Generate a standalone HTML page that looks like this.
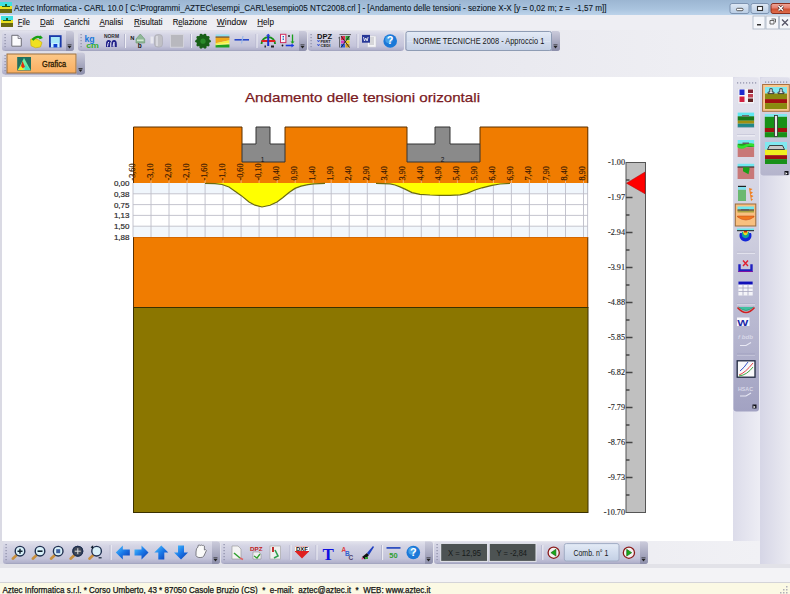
<!DOCTYPE html>
<html><head><meta charset="utf-8">
<style>
*{margin:0;padding:0}
html,body{width:790px;height:594px;overflow:hidden;background:#ebebf1;font-family:"Liberation Sans",sans-serif}
svg{position:absolute;left:0;top:0;display:block}
text{white-space:pre}
</style></head><body>
<svg width="790" height="594" viewBox="0 0 790 594">
<defs>
<linearGradient id="gTitle" x1="0" y1="0" x2="0" y2="1"><stop offset="0" stop-color="#9cb6d2"/><stop offset="0.6" stop-color="#a9c3de"/><stop offset="1" stop-color="#bcd3ea"/></linearGradient>
<linearGradient id="gTb" x1="0" y1="0" x2="0" y2="1"><stop offset="0" stop-color="#e2e2ec"/><stop offset="0.2" stop-color="#d4d4e4"/><stop offset="0.75" stop-color="#c4c4da"/><stop offset="1" stop-color="#aaaac6"/></linearGradient>
<linearGradient id="gCh" x1="0" y1="0" x2="0" y2="1"><stop offset="0" stop-color="#cbcbdb"/><stop offset="1" stop-color="#8c8eaa"/></linearGradient>
<linearGradient id="gVt1" x1="0" y1="0" x2="0" y2="1"><stop offset="0" stop-color="#e4e4ee"/><stop offset="0.45" stop-color="#d0d0e0"/><stop offset="1" stop-color="#a2a2c2"/></linearGradient>
<linearGradient id="gVt2" x1="0" y1="0" x2="0" y2="1"><stop offset="0" stop-color="#e0e0ec"/><stop offset="1" stop-color="#b4b4cc"/></linearGradient>
<linearGradient id="gCombo" x1="0" y1="0" x2="0" y2="1"><stop offset="0" stop-color="#e4ebf6"/><stop offset="0.5" stop-color="#d3ddee"/><stop offset="1" stop-color="#c3cfe4"/></linearGradient>
<linearGradient id="gGraf" x1="0" y1="0" x2="0" y2="1"><stop offset="0" stop-color="#fcc888"/><stop offset="1" stop-color="#f9ae60"/></linearGradient>
<linearGradient id="gBtn" x1="0" y1="0" x2="0" y2="1"><stop offset="0" stop-color="#dfe9f5"/><stop offset="1" stop-color="#b8cce4"/></linearGradient>
<linearGradient id="gClose" x1="0" y1="0" x2="0" y2="1"><stop offset="0" stop-color="#f0a898"/><stop offset="0.45" stop-color="#e48070"/><stop offset="0.55" stop-color="#d05030"/><stop offset="1" stop-color="#e07050"/></linearGradient>
<linearGradient id="gRd1" x1="0" y1="0" x2="1" y2="0"><stop offset="0" stop-color="#dcdcea"/><stop offset="1" stop-color="#ededf4"/></linearGradient>
<linearGradient id="gRd2" x1="0" y1="0" x2="1" y2="0"><stop offset="0" stop-color="#d6d6e6"/><stop offset="1" stop-color="#ebebf2"/></linearGradient>
<linearGradient id="gDock" x1="0" y1="0" x2="1" y2="0"><stop offset="0" stop-color="#dcdce6"/><stop offset="1" stop-color="#f1f1f5"/></linearGradient>
</defs>
<rect x="0" y="0" width="790" height="594" fill="#eeeef3"/>
<rect x="0" y="0" width="790" height="15" fill="url(#gTitle)"/>
<rect x="0" y="30" width="790" height="47" fill="url(#gDock)"/>
<rect x="0" y="77" width="2" height="464" fill="#dadae4"/>
<rect x="2" y="77" width="731" height="464" fill="#fff"/>
<rect x="733" y="77" width="27" height="464" fill="url(#gRd1)"/>
<rect x="0" y="541" width="760" height="24" fill="url(#gDock)"/>
<rect x="760" y="77" width="30" height="488" fill="url(#gRd2)"/>
<rect x="0" y="564" width="790" height="4" fill="#e2e2e8"/>
<rect x="0" y="568" width="790" height="14" fill="#f3f3f6"/>
<rect x="0" y="582" width="790" height="1" fill="#d4d4d8"/>
<rect x="0" y="583" width="790" height="11" fill="#fbf9e4"/>
<rect x="0" y="2" width="12" height="11" fill="#6a6a10"/>
<rect x="0" y="2" width="12" height="4" fill="#40e0e0"/>
<rect x="0" y="6" width="12" height="3" fill="#e8e020"/>
<path d="M2,6h3v-2h2v2h3v1h-8z" fill="#206020"/>
<text x="14" y="10.7" font-family="Liberation Sans" font-size="8.8" fill="#0e1826" stroke="#0e1826" stroke-width="0.1" textLength="592.5" lengthAdjust="spacingAndGlyphs">Aztec Informatica - CARL 10.0 [ C:\Programmi_AZTEC\esempi_CARL\esempio05 NTC2008.crl ] - [Andamento delle tensioni - sezione X-X [y = 0,02 m; z =  -1,57 m]]</text>
<rect x="730" y="3.5" width="19" height="10" rx="2" fill="url(#gBtn)" stroke="#7d93b0" stroke-width="1"/>
<rect x="736.5" y="8.3" width="6.5" height="2.4" rx="1" fill="#fff" stroke="#333" stroke-width="0.8"/>
<rect x="751" y="3.5" width="18" height="10" rx="2" fill="url(#gBtn)" stroke="#7d93b0" stroke-width="1"/>
<rect x="757.5" y="6.5" width="5" height="4" fill="#fff" stroke="#333" stroke-width="1.1"/>
<rect x="771" y="3.5" width="22" height="10" rx="2" fill="url(#gClose)" stroke="#8a3020" stroke-width="1"/>
<path d="M778.5,6 L783,10.5 M783,6 L778.5,10.5" stroke="#402020" stroke-width="2.6"/><path d="M778.5,6 L783,10.5 M783,6 L778.5,10.5" stroke="#fff" stroke-width="1.5"/>
<rect x="1" y="16" width="12" height="11" fill="#6a6a10"/>
<rect x="1" y="16" width="12" height="4" fill="#40e0e0"/>
<rect x="1" y="20" width="12" height="3" fill="#e8e020"/>
<path d="M3,20h3v-2h2v2h3v1h-8z" fill="#206020"/>
<text x="17.8" y="24.8" font-family="Liberation Sans" font-size="9.2" fill="#101010" stroke="#101010" stroke-width="0.1" textLength="12.2" lengthAdjust="spacingAndGlyphs">File</text>
<rect x="17.8" y="25.9" width="4.6" height="0.9" fill="#333"/>
<text x="40" y="24.8" font-family="Liberation Sans" font-size="9.2" fill="#101010" stroke="#101010" stroke-width="0.1" textLength="14" lengthAdjust="spacingAndGlyphs">Dati</text>
<rect x="40.0" y="25.9" width="5.7" height="0.9" fill="#333"/>
<text x="64" y="24.8" font-family="Liberation Sans" font-size="9.2" fill="#101010" stroke="#101010" stroke-width="0.1" textLength="25.6" lengthAdjust="spacingAndGlyphs">Carichi</text>
<rect x="64.0" y="25.9" width="5.9" height="0.9" fill="#333"/>
<text x="99.5" y="24.8" font-family="Liberation Sans" font-size="9.2" fill="#101010" stroke="#101010" stroke-width="0.1" textLength="23.5" lengthAdjust="spacingAndGlyphs">Analisi</text>
<rect x="99.5" y="25.9" width="5.3" height="0.9" fill="#333"/>
<text x="134" y="24.8" font-family="Liberation Sans" font-size="9.2" fill="#101010" stroke="#101010" stroke-width="0.1" textLength="28.6" lengthAdjust="spacingAndGlyphs">Risultati</text>
<rect x="134.0" y="25.9" width="5.8" height="0.9" fill="#333"/>
<text x="172.7" y="24.8" font-family="Liberation Sans" font-size="9.2" fill="#101010" stroke="#101010" stroke-width="0.1" textLength="34.5" lengthAdjust="spacingAndGlyphs">Relazione</text>
<rect x="178.3" y="25.9" width="4.3" height="0.9" fill="#333"/>
<text x="216.8" y="24.8" font-family="Liberation Sans" font-size="9.2" fill="#101010" stroke="#101010" stroke-width="0.1" textLength="30.2" lengthAdjust="spacingAndGlyphs">Window</text>
<rect x="216.8" y="25.9" width="8.0" height="0.9" fill="#333"/>
<text x="257.3" y="24.8" font-family="Liberation Sans" font-size="9.2" fill="#101010" stroke="#101010" stroke-width="0.1" textLength="16.6" lengthAdjust="spacingAndGlyphs">Help</text>
<rect x="257.3" y="25.9" width="5.8" height="0.9" fill="#333"/>
<rect x="753" y="16" width="12" height="13" fill="#f4f6fa" stroke="#a8b4c4" stroke-width="0.8"/>
<rect x="766" y="16" width="12.5" height="13" fill="#f4f6fa" stroke="#a8b4c4" stroke-width="0.8"/>
<rect x="779.5" y="16" width="11.5" height="13" fill="#f4f6fa" stroke="#a8b4c4" stroke-width="0.8"/>
<rect x="757" y="24" width="4" height="1.5" fill="#333"/>
<path d="M770,20.5h4v3.5h-4z M771.5,19h4v3.5" fill="none" stroke="#555" stroke-width="0.9"/>
<path d="M782,19.5 L788,25.5 M788,19.5 L782,25.5" stroke="#556" stroke-width="1.3"/>
<rect x="2" y="31" width="72" height="20" rx="3" fill="url(#gTb)"/>
<path d="M5,50.5 H71" stroke="#a4a6c0" stroke-width="1"/>
<rect x="4.5" y="34" width="1.2" height="1.2" fill="#8a8ca6"/>
<rect x="4.5" y="37" width="1.2" height="1.2" fill="#8a8ca6"/>
<rect x="4.5" y="40" width="1.2" height="1.2" fill="#8a8ca6"/>
<rect x="4.5" y="43" width="1.2" height="1.2" fill="#8a8ca6"/>
<rect x="4.5" y="46" width="1.2" height="1.2" fill="#8a8ca6"/>
<path d="M66,31 h5 a3,3 0 0 1 3,3 v14 a3,3 0 0 1 -3,3 h-5 z" fill="url(#gCh)"/>
<path d="M67.5,46 h4 l-2,2.5 z" fill="#222"/>
<rect x="67.5" y="44.5" width="4" height="0.8" fill="#222"/>
<rect x="78" y="31" width="229" height="20" rx="3" fill="url(#gTb)"/>
<path d="M81,50.5 H304" stroke="#a4a6c0" stroke-width="1"/>
<rect x="80.5" y="34" width="1.2" height="1.2" fill="#8a8ca6"/>
<rect x="80.5" y="37" width="1.2" height="1.2" fill="#8a8ca6"/>
<rect x="80.5" y="40" width="1.2" height="1.2" fill="#8a8ca6"/>
<rect x="80.5" y="43" width="1.2" height="1.2" fill="#8a8ca6"/>
<rect x="80.5" y="46" width="1.2" height="1.2" fill="#8a8ca6"/>
<path d="M299,31 h5 a3,3 0 0 1 3,3 v14 a3,3 0 0 1 -3,3 h-5 z" fill="url(#gCh)"/>
<path d="M300.5,46 h4 l-2,2.5 z" fill="#222"/>
<rect x="300.5" y="44.5" width="4" height="0.8" fill="#222"/>
<rect x="308" y="31" width="96" height="20" rx="3" fill="url(#gTb)"/>
<path d="M311,50.5 H401" stroke="#a4a6c0" stroke-width="1"/>
<rect x="310.5" y="34" width="1.2" height="1.2" fill="#8a8ca6"/>
<rect x="310.5" y="37" width="1.2" height="1.2" fill="#8a8ca6"/>
<rect x="310.5" y="40" width="1.2" height="1.2" fill="#8a8ca6"/>
<rect x="310.5" y="43" width="1.2" height="1.2" fill="#8a8ca6"/>
<rect x="310.5" y="46" width="1.2" height="1.2" fill="#8a8ca6"/>
<rect x="405" y="31" width="155" height="20" rx="3" fill="url(#gTb)"/>
<path d="M408,50.5 H557" stroke="#a4a6c0" stroke-width="1"/>
<rect x="407.5" y="34" width="1.2" height="1.2" fill="#8a8ca6"/>
<rect x="407.5" y="37" width="1.2" height="1.2" fill="#8a8ca6"/>
<rect x="407.5" y="40" width="1.2" height="1.2" fill="#8a8ca6"/>
<rect x="407.5" y="43" width="1.2" height="1.2" fill="#8a8ca6"/>
<rect x="407.5" y="46" width="1.2" height="1.2" fill="#8a8ca6"/>
<path d="M552,31 h5 a3,3 0 0 1 3,3 v14 a3,3 0 0 1 -3,3 h-5 z" fill="url(#gCh)"/>
<path d="M553.5,46 h4 l-2,2.5 z" fill="#222"/>
<rect x="553.5" y="44.5" width="4" height="0.8" fill="#222"/>
<rect x="2" y="52.5" width="83" height="22" rx="3" fill="url(#gTb)"/>
<path d="M5,74.0 H82" stroke="#a4a6c0" stroke-width="1"/>
<rect x="4.5" y="55" width="1.2" height="1.2" fill="#8a8ca6"/>
<rect x="4.5" y="58" width="1.2" height="1.2" fill="#8a8ca6"/>
<rect x="4.5" y="61" width="1.2" height="1.2" fill="#8a8ca6"/>
<rect x="4.5" y="64" width="1.2" height="1.2" fill="#8a8ca6"/>
<rect x="4.5" y="67" width="1.2" height="1.2" fill="#8a8ca6"/>
<rect x="4.5" y="70" width="1.2" height="1.2" fill="#8a8ca6"/>
<path d="M77,52.5 h5 a3,3 0 0 1 3,3 v16 a3,3 0 0 1 -3,3 h-5 z" fill="url(#gCh)"/>
<path d="M78.5,69.5 h4 l-2,2.5 z" fill="#222"/>
<rect x="78.5" y="68.0" width="4" height="0.8" fill="#222"/>
<rect x="7" y="54" width="69" height="19" fill="url(#gGraf)" stroke="#9a7040" stroke-width="1"/>
<text x="42.1" y="66.5" font-family="Liberation Sans" font-size="8.2" fill="#2a1a00" stroke="#2a1a00" stroke-width="0.3" textLength="24" lengthAdjust="spacingAndGlyphs">Grafica</text>
<rect x="3" y="541.5" width="217" height="22.5" rx="3" fill="url(#gTb)"/>
<path d="M6,563.5 H217" stroke="#a4a6c0" stroke-width="1"/>
<rect x="5.5" y="544" width="1.2" height="1.2" fill="#8a8ca6"/>
<rect x="5.5" y="547" width="1.2" height="1.2" fill="#8a8ca6"/>
<rect x="5.5" y="550" width="1.2" height="1.2" fill="#8a8ca6"/>
<rect x="5.5" y="553" width="1.2" height="1.2" fill="#8a8ca6"/>
<rect x="5.5" y="556" width="1.2" height="1.2" fill="#8a8ca6"/>
<rect x="5.5" y="559" width="1.2" height="1.2" fill="#8a8ca6"/>
<path d="M212,541.5 h5 a3,3 0 0 1 3,3 v16.5 a3,3 0 0 1 -3,3 h-5 z" fill="url(#gCh)"/>
<path d="M213.5,559.0 h4 l-2,2.5 z" fill="#222"/>
<rect x="213.5" y="557.5" width="4" height="0.8" fill="#222"/>
<rect x="221" y="541.5" width="212" height="22.5" rx="3" fill="url(#gTb)"/>
<path d="M224,563.5 H430" stroke="#a4a6c0" stroke-width="1"/>
<rect x="223.5" y="544" width="1.2" height="1.2" fill="#8a8ca6"/>
<rect x="223.5" y="547" width="1.2" height="1.2" fill="#8a8ca6"/>
<rect x="223.5" y="550" width="1.2" height="1.2" fill="#8a8ca6"/>
<rect x="223.5" y="553" width="1.2" height="1.2" fill="#8a8ca6"/>
<rect x="223.5" y="556" width="1.2" height="1.2" fill="#8a8ca6"/>
<rect x="223.5" y="559" width="1.2" height="1.2" fill="#8a8ca6"/>
<path d="M425,541.5 h5 a3,3 0 0 1 3,3 v16.5 a3,3 0 0 1 -3,3 h-5 z" fill="url(#gCh)"/>
<path d="M426.5,559.0 h4 l-2,2.5 z" fill="#222"/>
<rect x="426.5" y="557.5" width="4" height="0.8" fill="#222"/>
<rect x="434" y="541.5" width="214" height="22.5" rx="3" fill="url(#gTb)"/>
<path d="M437,563.5 H645" stroke="#a4a6c0" stroke-width="1"/>
<rect x="436.5" y="544" width="1.2" height="1.2" fill="#8a8ca6"/>
<rect x="436.5" y="547" width="1.2" height="1.2" fill="#8a8ca6"/>
<rect x="436.5" y="550" width="1.2" height="1.2" fill="#8a8ca6"/>
<rect x="436.5" y="553" width="1.2" height="1.2" fill="#8a8ca6"/>
<rect x="436.5" y="556" width="1.2" height="1.2" fill="#8a8ca6"/>
<rect x="436.5" y="559" width="1.2" height="1.2" fill="#8a8ca6"/>
<path d="M640,541.5 h5 a3,3 0 0 1 3,3 v16.5 a3,3 0 0 1 -3,3 h-5 z" fill="url(#gCh)"/>
<path d="M641.5,559.0 h4 l-2,2.5 z" fill="#222"/>
<rect x="641.5" y="557.5" width="4" height="0.8" fill="#222"/>
<path d="M124.5,34V48" stroke="#b4b5cc" stroke-width="1"/><path d="M125.5,34V48" stroke="#f0f0f6" stroke-width="1"/>
<path d="M190.5,34V48" stroke="#b4b5cc" stroke-width="1"/><path d="M191.5,34V48" stroke="#f0f0f6" stroke-width="1"/>
<path d="M256,34V48" stroke="#b4b5cc" stroke-width="1"/><path d="M257,34V48" stroke="#f0f0f6" stroke-width="1"/>
<path d="M357,34V48" stroke="#b4b5cc" stroke-width="1"/><path d="M358,34V48" stroke="#f0f0f6" stroke-width="1"/>
<path d="M110.2,545V560" stroke="#b4b5cc" stroke-width="1"/><path d="M111.2,545V560" stroke="#f0f0f6" stroke-width="1"/>
<path d="M290,545V560" stroke="#b4b5cc" stroke-width="1"/><path d="M291,545V560" stroke="#f0f0f6" stroke-width="1"/>
<path d="M316,545V560" stroke="#b4b5cc" stroke-width="1"/><path d="M317,545V560" stroke="#f0f0f6" stroke-width="1"/>
<path d="M381.6,545V560" stroke="#b4b5cc" stroke-width="1"/><path d="M382.6,545V560" stroke="#f0f0f6" stroke-width="1"/>
<path d="M541.8,545V560" stroke="#b4b5cc" stroke-width="1"/><path d="M542.8,545V560" stroke="#f0f0f6" stroke-width="1"/>
<rect x="406" y="31.5" width="145.5" height="19" rx="2" fill="url(#gCombo)" stroke="#8e9cb4" stroke-width="1"/>
<path d="M407,41.5 H550" stroke="#f0f4fa" stroke-width="0.6" opacity="0.6"/>
<text x="413.3" y="43.6" font-family="Liberation Sans" font-size="8.3" fill="#141414" textLength="131" lengthAdjust="spacingAndGlyphs">NORME TECNICHE 2008 - Approccio 1</text>
<rect x="440.7" y="543.4" width="46.9" height="18" fill="#4d5353" stroke="#e6e8ee" stroke-width="1"/>
<text x="448" y="555.8" font-family="Liberation Sans" font-size="8.6" fill="#161a1a" textLength="33" lengthAdjust="spacingAndGlyphs">X = 12,95</text>
<rect x="489.2" y="543.4" width="46.8" height="18" fill="#4d5353" stroke="#e6e8ee" stroke-width="1"/>
<text x="496.6" y="555.8" font-family="Liberation Sans" font-size="8.6" fill="#161a1a" textLength="30.4" lengthAdjust="spacingAndGlyphs">Y = -2,84</text>
<rect x="564.3" y="543.6" width="54.7" height="17.4" rx="2" fill="url(#gCombo)" stroke="#a0acc4" stroke-width="1"/>
<text x="573.4" y="555.8" font-family="Liberation Sans" font-size="8.6" fill="#161616" textLength="35" lengthAdjust="spacingAndGlyphs">Comb. n° 1</text>
<circle cx="553.7" cy="552.7" r="5.6" fill="#f4f0f0" stroke="#8a1a1a" stroke-width="1.3"/>
<path d="M550.9000000000001,552.7 L555.9000000000001,549.3 V556.1 Z" fill="#18a818" stroke="#106010" stroke-width="0.6"/>
<circle cx="628.9" cy="552.7" r="5.6" fill="#f4f0f0" stroke="#8a1a1a" stroke-width="1.3"/>
<path d="M631.6999999999999,552.7 L626.6999999999999,549.3 V556.1 Z" fill="#18a818" stroke="#106010" stroke-width="0.6"/>
<text x="2.5" y="592.9" font-family="Liberation Sans" font-size="8.7" fill="#121212" stroke="#121212" stroke-width="0.25" textLength="428" lengthAdjust="spacingAndGlyphs">Aztec Informatica s.r.l. * Corso Umberto, 43 * 87050 Casole Bruzio (CS)  *  e-mail:  aztec@aztec.it  *  WEB: www.aztec.it</text>
<rect x="786" y="592" width="1.5" height="1.5" fill="#b0b0b8"/>
<rect x="783" y="592" width="1.5" height="1.5" fill="#b0b0b8"/>
<rect x="786" y="589" width="1.5" height="1.5" fill="#b0b0b8"/>
<rect x="780" y="592" width="1.5" height="1.5" fill="#b0b0b8"/>
<rect x="783" y="589" width="1.5" height="1.5" fill="#b0b0b8"/>
<rect x="786" y="586" width="1.5" height="1.5" fill="#b0b0b8"/>
<rect x="733.5" y="77.5" width="25.5" height="334" rx="3" fill="url(#gVt1)"/>
<rect x="760.5" y="77.5" width="29.5" height="98" rx="3" fill="url(#gVt2)"/>
<rect x="737" y="82.3" width="1.2" height="1.2" fill="#8a8ca6"/>
<rect x="740" y="82.3" width="1.2" height="1.2" fill="#8a8ca6"/>
<rect x="743" y="82.3" width="1.2" height="1.2" fill="#8a8ca6"/>
<rect x="746" y="82.3" width="1.2" height="1.2" fill="#8a8ca6"/>
<rect x="749" y="82.3" width="1.2" height="1.2" fill="#8a8ca6"/>
<rect x="752" y="82.3" width="1.2" height="1.2" fill="#8a8ca6"/>
<rect x="755" y="82.3" width="1.2" height="1.2" fill="#8a8ca6"/>
<rect x="765" y="81.5" width="1.2" height="1.2" fill="#8a8ca6"/>
<rect x="768" y="81.5" width="1.2" height="1.2" fill="#8a8ca6"/>
<rect x="771" y="81.5" width="1.2" height="1.2" fill="#8a8ca6"/>
<rect x="774" y="81.5" width="1.2" height="1.2" fill="#8a8ca6"/>
<rect x="777" y="81.5" width="1.2" height="1.2" fill="#8a8ca6"/>
<rect x="780" y="81.5" width="1.2" height="1.2" fill="#8a8ca6"/>
<rect x="783" y="81.5" width="1.2" height="1.2" fill="#8a8ca6"/>
<rect x="786" y="81.5" width="1.2" height="1.2" fill="#8a8ca6"/>
<text x="245" y="101.5" textLength="235" lengthAdjust="spacingAndGlyphs" font-family="Liberation Sans" font-size="13.6" fill="#7a1a22" stroke="#7a1a22" stroke-width="0.25">Andamento delle tensioni orizontali</text>
<path d="M133,127 H242 V144 H256 V127 H270 V144 H285 V127 H407 V144 H435 V127 H450 V144 H480 V127 H588 V183 H133 Z" fill="#f07c00"/><path d="M133.5,183 V127 H242 V144 M285,144 V127 H407 V144 M480,144 V127 H587.8 V183" fill="none" stroke="#5a3000" stroke-width="1"/>
<path d="M242,144 H256 V127 H270 V144 H285 V162 H242 Z" fill="#8a8a8a" stroke="#333" stroke-width="1"/>
<path d="M407,144 H435 V127 H450 V144 H480 V162 H407 Z" fill="#8a8a8a" stroke="#333" stroke-width="1"/>
<rect x="133" y="237" width="455" height="70.5" fill="#f07c00"/><path d="M133.5,237V308 M587.8,237V308" stroke="#5a3000" stroke-width="1"/><path d="M133.5,237.4H588" stroke="#c86000" stroke-width="0.8"/>
<rect x="133.5" y="307.5" width="454.5" height="205" fill="#8b7600" stroke="#3a3000" stroke-width="1"/>
<rect x="626" y="162.5" width="19.5" height="350" fill="#c0c0c0" stroke="#555" stroke-width="1"/>
<rect x="133" y="183" width="455" height="54" fill="#fff"/>
<rect x="133" y="183" width="455" height="10.5" fill="#f0f6fc"/>
<rect x="133" y="226.5" width="455" height="10.5" fill="#f2f7fc"/>
<path d="M133.0,183V237M151.0,183V237M169.0,183V237M187.1,183V237M205.1,183V237M223.1,183V237M241.1,183V237M259.1,183V237M277.2,183V237M295.2,183V237M313.2,183V237M331.2,183V237M349.2,183V237M367.3,183V237M385.3,183V237M403.3,183V237M421.3,183V237M439.3,183V237M457.4,183V237M475.4,183V237M493.4,183V237M511.4,183V237M529.4,183V237M547.5,183V237M565.5,183V237M583.5,183V237M133,193.8H588M133,204.6H588M133,215.4H588M133,226.2H588M587.6,183V237" stroke="#bdbdc8" stroke-width="0.9" fill="none"/>
<path d="M205.0,183 L205.0,183.3 L215.0,183.6 L222.0,184.5 L229.0,187.0 L235.0,191.2 L241.0,195.4 L249.0,202.0 L255.0,205.2 L262.0,207.0 L270.0,205.3 L277.0,202.0 L283.0,197.5 L289.0,192.5 L295.0,188.4 L301.0,186.2 L308.0,184.6 L314.0,183.8 L325.0,183.3 L325.0,183 Z" fill="#ffff00"/>
<path d="M376.0,183 L376.0,183.3 L390.0,183.8 L395.0,185.0 L400.0,186.9 L405.0,189.1 L412.0,192.6 L420.0,194.3 L430.0,195.0 L440.0,195.4 L450.0,195.3 L460.0,194.8 L467.0,193.3 L475.0,190.0 L482.0,187.8 L492.0,185.3 L500.0,184.0 L510.0,183.3 L510.0,183 Z" fill="#ffff00"/>
<path d="M205.0,183.3 L215.0,183.6 L222.0,184.5 L229.0,187.0 L235.0,191.2 L241.0,195.4 L249.0,202.0 L255.0,205.2 L262.0,207.0 L270.0,205.3 L277.0,202.0 L283.0,197.5 L289.0,192.5 L295.0,188.4 L301.0,186.2 L308.0,184.6 L314.0,183.8 L325.0,183.3" stroke="#6b6b10" stroke-width="1.2" fill="none"/>
<path d="M376.0,183.3 L390.0,183.8 L395.0,185.0 L400.0,186.9 L405.0,189.1 L412.0,192.6 L420.0,194.3 L430.0,195.0 L440.0,195.4 L450.0,195.3 L460.0,194.8 L467.0,193.3 L475.0,190.0 L482.0,187.8 L492.0,185.3 L500.0,184.0 L510.0,183.3" stroke="#6b6b10" stroke-width="1.2" fill="none"/>
<path d="M151.0,180V183M169.0,180V183M187.1,180V183M205.1,180V183M223.1,180V183M241.1,180V183M259.1,180V183M277.2,180V183M295.2,180V183M313.2,180V183M331.2,180V183M349.2,180V183M367.3,180V183M385.3,180V183M403.3,180V183M421.3,180V183M439.3,180V183M457.4,180V183M475.4,180V183M493.4,180V183M511.4,180V183M529.4,180V183M547.5,180V183M565.5,180V183M583.5,180V183" stroke="#f7b070" stroke-width="1" fill="none"/>
<text transform="translate(134.8,180.5) rotate(-90)" font-family="Liberation Serif" font-size="8.2" fill="#3a1800" stroke="#3a1800" stroke-width="0.2">-3,60</text>
<text transform="translate(152.8,180.5) rotate(-90)" font-family="Liberation Serif" font-size="8.2" fill="#3a1800" stroke="#3a1800" stroke-width="0.2">-3,10</text>
<text transform="translate(170.8,180.5) rotate(-90)" font-family="Liberation Serif" font-size="8.2" fill="#3a1800" stroke="#3a1800" stroke-width="0.2">-2,60</text>
<text transform="translate(188.9,180.5) rotate(-90)" font-family="Liberation Serif" font-size="8.2" fill="#3a1800" stroke="#3a1800" stroke-width="0.2">-2,10</text>
<text transform="translate(206.9,180.5) rotate(-90)" font-family="Liberation Serif" font-size="8.2" fill="#3a1800" stroke="#3a1800" stroke-width="0.2">-1,60</text>
<text transform="translate(224.9,180.5) rotate(-90)" font-family="Liberation Serif" font-size="8.2" fill="#3a1800" stroke="#3a1800" stroke-width="0.2">-1,10</text>
<text transform="translate(242.9,180.5) rotate(-90)" font-family="Liberation Serif" font-size="8.2" fill="#3a1800" stroke="#3a1800" stroke-width="0.2">-0,60</text>
<text transform="translate(260.9,180.5) rotate(-90)" font-family="Liberation Serif" font-size="8.2" fill="#3a1800" stroke="#3a1800" stroke-width="0.2">-0,10</text>
<text transform="translate(279.0,180.5) rotate(-90)" font-family="Liberation Serif" font-size="8.2" fill="#3a1800" stroke="#3a1800" stroke-width="0.2">0,40</text>
<text transform="translate(297.0,180.5) rotate(-90)" font-family="Liberation Serif" font-size="8.2" fill="#3a1800" stroke="#3a1800" stroke-width="0.2">0,90</text>
<text transform="translate(315.0,180.5) rotate(-90)" font-family="Liberation Serif" font-size="8.2" fill="#3a1800" stroke="#3a1800" stroke-width="0.2">1,40</text>
<text transform="translate(333.0,180.5) rotate(-90)" font-family="Liberation Serif" font-size="8.2" fill="#3a1800" stroke="#3a1800" stroke-width="0.2">1,90</text>
<text transform="translate(351.0,180.5) rotate(-90)" font-family="Liberation Serif" font-size="8.2" fill="#3a1800" stroke="#3a1800" stroke-width="0.2">2,40</text>
<text transform="translate(369.1,180.5) rotate(-90)" font-family="Liberation Serif" font-size="8.2" fill="#3a1800" stroke="#3a1800" stroke-width="0.2">2,90</text>
<text transform="translate(387.1,180.5) rotate(-90)" font-family="Liberation Serif" font-size="8.2" fill="#3a1800" stroke="#3a1800" stroke-width="0.2">3,40</text>
<text transform="translate(405.1,180.5) rotate(-90)" font-family="Liberation Serif" font-size="8.2" fill="#3a1800" stroke="#3a1800" stroke-width="0.2">3,90</text>
<text transform="translate(423.1,180.5) rotate(-90)" font-family="Liberation Serif" font-size="8.2" fill="#3a1800" stroke="#3a1800" stroke-width="0.2">4,40</text>
<text transform="translate(441.1,180.5) rotate(-90)" font-family="Liberation Serif" font-size="8.2" fill="#3a1800" stroke="#3a1800" stroke-width="0.2">4,90</text>
<text transform="translate(459.2,180.5) rotate(-90)" font-family="Liberation Serif" font-size="8.2" fill="#3a1800" stroke="#3a1800" stroke-width="0.2">5,40</text>
<text transform="translate(477.2,180.5) rotate(-90)" font-family="Liberation Serif" font-size="8.2" fill="#3a1800" stroke="#3a1800" stroke-width="0.2">5,90</text>
<text transform="translate(495.2,180.5) rotate(-90)" font-family="Liberation Serif" font-size="8.2" fill="#3a1800" stroke="#3a1800" stroke-width="0.2">6,40</text>
<text transform="translate(513.2,180.5) rotate(-90)" font-family="Liberation Serif" font-size="8.2" fill="#3a1800" stroke="#3a1800" stroke-width="0.2">6,90</text>
<text transform="translate(531.2,180.5) rotate(-90)" font-family="Liberation Serif" font-size="8.2" fill="#3a1800" stroke="#3a1800" stroke-width="0.2">7,40</text>
<text transform="translate(549.3,180.5) rotate(-90)" font-family="Liberation Serif" font-size="8.2" fill="#3a1800" stroke="#3a1800" stroke-width="0.2">7,90</text>
<text transform="translate(567.3,180.5) rotate(-90)" font-family="Liberation Serif" font-size="8.2" fill="#3a1800" stroke="#3a1800" stroke-width="0.2">8,40</text>
<text transform="translate(585.3,180.5) rotate(-90)" font-family="Liberation Serif" font-size="8.2" fill="#3a1800" stroke="#3a1800" stroke-width="0.2">8,90</text>
<text x="129.5" y="185.9" text-anchor="end" font-family="Liberation Sans" font-size="8" fill="#2a2a2a" stroke="#2a2a2a" stroke-width="0.2">0,00</text>
<text x="129.5" y="196.7" text-anchor="end" font-family="Liberation Sans" font-size="8" fill="#2a2a2a" stroke="#2a2a2a" stroke-width="0.2">0,38</text>
<text x="129.5" y="207.5" text-anchor="end" font-family="Liberation Sans" font-size="8" fill="#2a2a2a" stroke="#2a2a2a" stroke-width="0.2">0,75</text>
<text x="129.5" y="218.3" text-anchor="end" font-family="Liberation Sans" font-size="8" fill="#2a2a2a" stroke="#2a2a2a" stroke-width="0.2">1,13</text>
<text x="129.5" y="229.1" text-anchor="end" font-family="Liberation Sans" font-size="8" fill="#2a2a2a" stroke="#2a2a2a" stroke-width="0.2">1,50</text>
<text x="129.5" y="239.9" text-anchor="end" font-family="Liberation Sans" font-size="8" fill="#2a2a2a" stroke="#2a2a2a" stroke-width="0.2">1,88</text>
<text x="625" y="165.3" text-anchor="end" font-family="Liberation Serif" font-size="8.2" fill="#2a2a2a" stroke="#2a2a2a" stroke-width="0.15">-1.00</text>
<text x="625" y="200.3" text-anchor="end" font-family="Liberation Serif" font-size="8.2" fill="#2a2a2a" stroke="#2a2a2a" stroke-width="0.15">-1.97</text>
<text x="625" y="235.3" text-anchor="end" font-family="Liberation Serif" font-size="8.2" fill="#2a2a2a" stroke="#2a2a2a" stroke-width="0.15">-2.94</text>
<text x="625" y="270.3" text-anchor="end" font-family="Liberation Serif" font-size="8.2" fill="#2a2a2a" stroke="#2a2a2a" stroke-width="0.15">-3.91</text>
<text x="625" y="305.3" text-anchor="end" font-family="Liberation Serif" font-size="8.2" fill="#2a2a2a" stroke="#2a2a2a" stroke-width="0.15">-4.88</text>
<text x="625" y="340.3" text-anchor="end" font-family="Liberation Serif" font-size="8.2" fill="#2a2a2a" stroke="#2a2a2a" stroke-width="0.15">-5.85</text>
<text x="625" y="375.3" text-anchor="end" font-family="Liberation Serif" font-size="8.2" fill="#2a2a2a" stroke="#2a2a2a" stroke-width="0.15">-6.82</text>
<text x="625" y="410.3" text-anchor="end" font-family="Liberation Serif" font-size="8.2" fill="#2a2a2a" stroke="#2a2a2a" stroke-width="0.15">-7.79</text>
<text x="625" y="445.3" text-anchor="end" font-family="Liberation Serif" font-size="8.2" fill="#2a2a2a" stroke="#2a2a2a" stroke-width="0.15">-8.76</text>
<text x="625" y="480.3" text-anchor="end" font-family="Liberation Serif" font-size="8.2" fill="#2a2a2a" stroke="#2a2a2a" stroke-width="0.15">-9.73</text>
<text x="625" y="515.3" text-anchor="end" font-family="Liberation Serif" font-size="8.2" fill="#2a2a2a" stroke="#2a2a2a" stroke-width="0.15">-10.70</text>
<path d="M626,180.0H629.5M626,197.5H632.5M626,215.0H629.5M626,232.5H632.5M626,250.0H629.5M626,267.5H632.5M626,285.0H629.5M626,302.5H632.5M626,320.0H629.5M626,337.5H632.5M626,355.0H629.5M626,372.5H632.5M626,390.0H629.5M626,407.5H632.5M626,425.0H629.5M626,442.5H632.5M626,460.0H629.5M626,477.5H632.5M626,495.0H629.5" stroke="#444" stroke-width="1.3" fill="none"/>
<path d="M626.5,183.2 L645,172 V193.8 Z" fill="#ff0000" stroke="#a00" stroke-width="0.5"/>
<text x="262.5" y="162" font-family="Liberation Sans" font-size="6.5" fill="#111" text-anchor="middle">1</text>
<text x="442.5" y="162" font-family="Liberation Sans" font-size="6.5" fill="#111" text-anchor="middle">2</text>
<defs><linearGradient id="gArr" x1="0" y1="0" x2="1" y2="1"><stop offset="0" stop-color="#50c8ff"/><stop offset="0.5" stop-color="#1a78e8"/><stop offset="1" stop-color="#0c38b0"/></linearGradient></defs>
<path d="M11.8,35.3 h6.3 l3.2,3.2 v7.7 h-9.5 z" fill="#fbfbfd" stroke="#6e6e78" stroke-width="1"/>
<path d="M18.1,35.3 v3.2 h3.2" fill="#e0e0e8" stroke="#6e6e78" stroke-width="0.8"/>
<path d="M30.5,39.5 l3,-1.5 l5,2 l3.5,2.5 l-1.5,4.5 l-5,0.8 l-4.5,-2 z" fill="#f0e020" stroke="#c8a800" stroke-width="0.6"/>
<path d="M32.5,40 q4,-5 9,-2" fill="none" stroke="#18a018" stroke-width="2.4"/>
<path d="M40,35.2 l3,2.8 l-4,1.2 z" fill="#18a018"/>
<rect x="49" y="35.2" width="12.6" height="12.2" fill="#1838a8"/>
<rect x="50.8" y="37" width="9" height="6" fill="#a8e8f8"/>
<rect x="51" y="43" width="8.6" height="4.4" fill="#c8f0ff"/>
<rect x="53.5" y="44" width="3.8" height="3.4" fill="#1040d0"/>
<text x="84.4" y="41.6" font-family="Liberation Sans" font-weight="bold" font-size="8.5" fill="#1a78d8" textLength="10.2" lengthAdjust="spacingAndGlyphs">kg</text>
<text x="86.2" y="47.8" font-family="Liberation Sans" font-weight="bold" font-size="7" fill="#30b030" textLength="12.8" lengthAdjust="spacingAndGlyphs">cm</text>
<text x="104" y="38.2" font-family="Liberation Sans" font-weight="bold" font-size="4.5" fill="#2a2a30" textLength="15" lengthAdjust="spacingAndGlyphs">NORM</text>
<path d="M106,47 v-3 q0,-4 2.7,-4 q2.7,0 2.7,4 q0,-4 2.7,-4 q2.7,0 2.7,4 v3 h-2 v-3 q0,-2 -0.7,-2 q-0.7,0 -0.7,2 v3 h-2 v-3 q0,-2 -0.7,-2 q-0.7,0 -0.7,2 v3 z" fill="#202088"/>
<path d="M107.5,46.5 q0.5,-4 1.2,-4.5 M113,46.5 q0.5,-4 1.2,-4.5" stroke="#e8e8ff" stroke-width="1" fill="none"/>
<text x="130.3" y="39.8" font-family="Liberation Sans" font-weight="bold" font-size="5.8" fill="#181818">N</text>
<path d="M136,39 l4.3,-5 l4.4,5 v4 h-8.7 z" fill="#90b898" stroke="#689870" stroke-width="0.6"/>
<rect x="137" y="39.5" width="6.6" height="1.6" fill="#cfe8d0"/>
<text x="137.8" y="47.9" font-family="Liberation Sans" font-weight="bold" font-size="6.5" fill="#181818">b</text>
<rect x="150.5" y="36.5" width="3" height="7" fill="#e8e8ee"/>
<rect x="154.5" y="34.6" width="8" height="12.5" rx="3" fill="#c0c0c6" stroke="#a8a8b0" stroke-width="0.6"/>
<rect x="156" y="36" width="2" height="10" fill="#d8d8de"/>
<rect x="170.4" y="34.6" width="13.2" height="12.6" fill="#b8b8be" stroke="#d8d8e0" stroke-width="0.8"/>
<circle cx="203" cy="41.2" r="6.6" fill="#186018"/>
<circle cx="209.4" cy="41.2" r="1.4" fill="#186018"/>
<circle cx="208.2" cy="45.0" r="1.4" fill="#186018"/>
<circle cx="205.0" cy="47.3" r="1.4" fill="#186018"/>
<circle cx="201.0" cy="47.3" r="1.4" fill="#186018"/>
<circle cx="197.8" cy="45.0" r="1.4" fill="#186018"/>
<circle cx="196.6" cy="41.2" r="1.4" fill="#186018"/>
<circle cx="197.8" cy="37.4" r="1.4" fill="#186018"/>
<circle cx="201.0" cy="35.1" r="1.4" fill="#186018"/>
<circle cx="205.0" cy="35.1" r="1.4" fill="#186018"/>
<circle cx="208.2" cy="37.4" r="1.4" fill="#186018"/>
<circle cx="203" cy="41.2" r="2.6" fill="#2a8a2a"/>
<rect x="215.6" y="34.5" width="13.8" height="2" fill="#90e0f0"/>
<rect x="215.6" y="36.5" width="13.8" height="1.3" fill="#604010"/>
<path d="M215.6,37.8 h13.8 v2.5 l-13.8,3 z" fill="#f0a818"/>
<path d="M215.6,43.3 l13.8,-3 v4.2 l-13.8,1.5 z" fill="#f8f040"/>
<path d="M215.6,44.8 l13.8,-0.3 v3 h-13.8 z" fill="#20a020"/>
<path d="M215.6,44.8 l13.8,-1.5" stroke="#f8f8a0" stroke-width="0.8"/>
<path d="M234.5,39.8 H249" stroke="#2848c8" stroke-width="1.6"/>
<path d="M243,36 l-1.5,7.5" stroke="#9ab8e8" stroke-width="1.2"/>
<path d="M261.5,44 a6.8,6.8 0 0 1 13.6,0" fill="none" stroke="#189018" stroke-width="1.8"/>
<path d="M261.5,41 H275.2" stroke="#e02020" stroke-width="2"/>
<path d="M268.2,35.5 V46" stroke="#1830d0" stroke-width="2"/>
<path d="M266,35.8 l2.2,-2 l2.2,2 z" fill="#1830d0"/>
<rect x="264.5" y="45.5" width="1.4" height="2" fill="#222"/><rect x="271" y="45.5" width="3" height="2" fill="#222"/>
<rect x="280.5" y="34.3" width="5.4" height="8.3" fill="#f4f4fa" stroke="#d03060" stroke-width="1"/>
<rect x="282.6" y="36" width="1.4" height="1.4" fill="#2060c0"/><rect x="282.6" y="38.5" width="1.4" height="1.4" fill="#2060c0"/>
<path d="M292.5,34.5 V42" stroke="#18a018" stroke-width="1.3"/><path d="M290.5,41.5 h4 l-2,2.2 z" fill="#18a018"/>
<path d="M285.7,45.5 H292" stroke="#1838e0" stroke-width="1.6"/><path d="M291.5,43.5 l2.8,2 l-2.8,2 z" fill="#1838e0"/>
<circle cx="282.5" cy="45.5" r="0.9" fill="#111"/><circle cx="289" cy="36" r="0.9" fill="#111"/>
<text x="317" y="38.9" font-family="Liberation Sans" font-weight="bold" font-size="6.6" fill="#101010" textLength="15" lengthAdjust="spacingAndGlyphs">DPZ</text>
<text x="320.5" y="43" font-family="Liberation Sans" font-weight="bold" font-size="4" fill="#181818" textLength="10" lengthAdjust="spacingAndGlyphs">PERT</text>
<text x="320.5" y="47" font-family="Liberation Sans" font-weight="bold" font-size="4" fill="#181818" textLength="10" lengthAdjust="spacingAndGlyphs">CEDI</text>
<path d="M317.5,40 l1,2 l1,-2 M317.5,44 l1,2 l1,-2" stroke="#2040d0" stroke-width="0.8" fill="none"/>
<path d="M338.4,38 l1.2,-1 V47.5 M339.5,34.6 H351" stroke="#404040" stroke-width="0.8" fill="none"/>
<rect x="341" y="36" width="4" height="4" fill="#e03050"/><rect x="345.5" y="36" width="4" height="4" fill="#30a030"/>
<rect x="341" y="40.5" width="4" height="3" fill="#d040c0"/><rect x="345.5" y="40.5" width="4" height="3" fill="#e8d020"/>
<rect x="341" y="44" width="4" height="3.5" fill="#3060e0"/><rect x="345.5" y="44" width="4" height="3.5" fill="#d8a020"/>
<path d="M341,36 l8.5,11.5 M349.5,36 l-8.5,11.5" stroke="#202020" stroke-width="0.9"/>
<rect x="367.7" y="36" width="8.3" height="11.1" fill="#f4f4f6" stroke="#c8c8d0" stroke-width="0.5"/>
<path d="M369,38 h5 M369,40 h5 M369,42 h5 M369,44 h5" stroke="#909098" stroke-width="0.6"/>
<rect x="362" y="34.9" width="8" height="7.8" fill="#283898"/>
<path d="M363.5,37 l1,4 l1.3,-3 l1.3,3 l1,-4" stroke="#fff" stroke-width="0.8" fill="none"/>
<circle cx="390.2" cy="41" r="6.8" fill="#1a78d8"/>
<circle cx="389.0" cy="39.5" r="3.74" fill="#5ab0f0" opacity="0.7"/>
<text x="390.2" y="44.2" font-family="Liberation Sans" font-weight="bold" font-size="10.88" fill="#fff" text-anchor="middle">?</text>
<rect x="17.2" y="57" width="13.8" height="13.5" fill="#207060"/>
<path d="M24,58 L30.5,70 H17.8 Z" fill="#70f0a0"/>
<path d="M22.5,61 L25,67 L20,69.5 Z" fill="#e03010"/>
<path d="M17.8,70 L21,66 L24,70 Z" fill="#f0f020"/>
<path d="M25,64 L30.5,70 H25 Z" fill="#40e0c0"/>
<path d="M12.8,558.7 L17.5,554.2" stroke="#c89040" stroke-width="2.6" stroke-linecap="round"/>
<circle cx="20.0" cy="551.2" r="4.8" fill="#d8f0f8" stroke="#203050" stroke-width="1.4"/>
<path d="M17.5,551.2H22.5M20.0,548.7V553.7" stroke="#102030" stroke-width="1.4"/>
<path d="M32.8,558.7 L37.5,554.2" stroke="#c89040" stroke-width="2.6" stroke-linecap="round"/>
<circle cx="40.0" cy="551.2" r="4.8" fill="#d8f0f8" stroke="#203050" stroke-width="1.4"/>
<path d="M37.5,551.2H42.5" stroke="#102030" stroke-width="1.6"/>
<path d="M51,558.7 L55.7,554.2" stroke="#c89040" stroke-width="2.6" stroke-linecap="round"/>
<circle cx="58.2" cy="551.2" r="4.8" fill="#d8f0f8" stroke="#203050" stroke-width="1.4"/>
<rect x="56.2" y="549.2" width="4" height="4" fill="#4060a0"/>
<path d="M70.6,558.7 L75.3,554.2" stroke="#c89040" stroke-width="2.6" stroke-linecap="round"/>
<circle cx="77.8" cy="551.2" r="4.8" fill="#d8f0f8" stroke="#203050" stroke-width="1.4"/>
<circle cx="77.8" cy="551.2" r="4.8" fill="#404858" stroke="#203050" stroke-width="1.4"/>
<path d="M74.8,551.2H80.8M77.8,548.2V554.2" stroke="#e0e0e0" stroke-width="1"/>
<path d="M89.4,558.7 L94.10000000000001,554.2" stroke="#c89040" stroke-width="2.6" stroke-linecap="round"/>
<circle cx="96.60000000000001" cy="551.2" r="4.8" fill="#d8f0f8" stroke="#203050" stroke-width="1.4"/>
<path d="M90.60000000000001,547.2 l2.5,-2 v4 z" fill="#102030"/>
<rect x="98.60000000000001" y="557.2" width="3" height="1.2" fill="#102030"/>
<path d="M115.8,552.6 l7,-7 v4 h7 v6 h-7 v4 z" fill="url(#gArr)"/>
<path d="M148.5,552.6 l-7,-7 v4 h-7 v6 h7 v4 z" fill="url(#gArr)"/>
<path d="M161.3,545.6 l7,7 h-4 v7 h-6 v-7 h-4 z" fill="url(#gArr)"/>
<path d="M181,559.6 l7,-7 h-4 v-7 h-6 v7 h-4 z" fill="url(#gArr)"/>
<path d="M196,552 q0,-4 2,-5 v-1.5 q1.2,-1 2.2,0 q1,-1 2.2,0 q1.2,-0.5 2,0.5 v4 q1.5,-1 2,0.5 l-2.5,5.5 q-1,1.5 -3,1.5 h-2 q-2,0 -2.9,-2 z" fill="#fafafa" stroke="#707078" stroke-width="0.9"/>
<path d="M232,546 h6 l3,3 v10 h-9 z" fill="#f4f4f4" stroke="#909090" stroke-width="0.6"/>
<path d="M234,553 l6,5" stroke="#30a030" stroke-width="1.5"/><path d="M240,558 l3,1.5" stroke="#e06060" stroke-width="1.5"/>
<text x="250" y="550.5" font-family="Liberation Sans" font-weight="bold" font-size="5" fill="#c02020" textLength="12.5" lengthAdjust="spacingAndGlyphs">DPZ</text>
<path d="M253,552 h6 l2,2 v5 h-8 z" fill="#f0f0f0" stroke="#808080" stroke-width="0.5"/>
<path d="M254,556 l3,2 l3,-4" stroke="#30a030" stroke-width="1.3" fill="none"/>
<rect x="270" y="546" width="10.5" height="13" fill="#f0f0f0" stroke="#a0a0a0" stroke-width="0.6"/>
<rect x="272" y="547" width="2" height="5" fill="#c03030"/><path d="M275,550 l3,6 l-4,2" stroke="#30a050" stroke-width="1.6" fill="none"/>
<path d="M295,546.5 h14 v5 l-7,7 l-7,-7 z" fill="#e02020"/>
<rect x="295" y="546.5" width="14" height="4.5" fill="#fafafa"/>
<text x="302" y="550.8" font-family="Liberation Sans" font-weight="bold" font-size="5" fill="#101010" text-anchor="middle" textLength="12" lengthAdjust="spacingAndGlyphs">DXF</text>
<text x="328.2" y="559.5" font-family="Liberation Serif" font-weight="bold" font-size="17" fill="#1010e0" text-anchor="middle">T</text>
<text x="341.5" y="552" font-family="Liberation Sans" font-weight="bold" font-size="6.5" fill="#e04040">A</text>
<text x="345" y="556" font-family="Liberation Sans" font-weight="bold" font-size="6.5" fill="#3060d0">B</text>
<text x="348.5" y="560" font-family="Liberation Sans" font-weight="bold" font-size="6.5" fill="#504070">C</text>
<path d="M362,557 l5,-4 l2,2 l-4,4.5 z" fill="#101010"/><path d="M367,553 l6,-7 l1,1 l-5,8 z" fill="#2040c0"/><path d="M362,557 l2,2 l-2.5,0.5 z" fill="#e04080"/><rect x="365" y="557" width="3" height="2" fill="#30a030"/>
<rect x="386.5" y="547" width="14" height="1.8" fill="#3050c0"/>
<text x="393.5" y="558" font-family="Liberation Sans" font-weight="bold" font-size="7.5" fill="#30a030" text-anchor="middle">50</text>
<circle cx="413.3" cy="552.5" r="6.8" fill="#1a78d8"/>
<circle cx="412.1" cy="551.0" r="3.74" fill="#5ab0f0" opacity="0.7"/>
<text x="413.3" y="555.7" font-family="Liberation Sans" font-weight="bold" font-size="10.88" fill="#fff" text-anchor="middle">?</text>
<rect x="738" y="88.3" width="16.5" height="15.6" fill="#f4f4f8" stroke="#d8d8e0" stroke-width="0.5"/>
<rect x="739.5" y="89.5" width="5" height="5.5" fill="#1a2ad0"/><rect x="739.5" y="96.5" width="5" height="5.5" fill="#d02040"/>
<rect x="748" y="89.5" width="5" height="3.5" fill="#802030"/><rect x="748" y="94" width="5" height="3.5" fill="#c04050"/><rect x="748" y="98.5" width="5" height="3.5" fill="#602020"/>
<rect x="737.7" y="112.60" width="16.4" height="3.70" fill="#60e8f0"/>
<rect x="737.7" y="116.30" width="16.4" height="4.44" fill="#187818"/>
<rect x="737.7" y="120.74" width="16.4" height="2.96" fill="#a09010"/>
<rect x="737.7" y="123.70" width="16.4" height="3.70" fill="#208888"/>
<rect x="742" y="115" width="7" height="1.6" fill="#707070"/>
<path d="M737.7,127.4 h16.4" stroke="#a8b0c8" stroke-width="0.6"/>
<path d="M737,134.8 H755" stroke="#c4c4d6" stroke-width="1"/><path d="M737,135.8 H755" stroke="#f6f6fa" stroke-width="1"/>
<rect x="737.7" y="140.00" width="16.4" height="3.74" fill="#70e8f0"/>
<rect x="737.7" y="143.74" width="16.4" height="3.40" fill="#20a020"/>
<rect x="737.7" y="147.14" width="16.4" height="9.86" fill="#c87878"/>
<path d="M737.7,144.5 q4,2.5 8,0 q4,-2.5 8.4,0 v2.5 q-4,-2 -8.4,0.5 q-4,2.5 -8,0 z" fill="#30e030"/>
<rect x="742.5" y="142.5" width="6.5" height="1.5" fill="#606060"/>
<rect x="737.6" y="163.80" width="16.6" height="3.04" fill="#70e8f0"/>
<rect x="737.6" y="166.84" width="16.6" height="12.16" fill="#c87878"/>
<path d="M737.6,167 H754.2" stroke="#202020" stroke-width="1"/>
<path d="M743,167.3 h6.5 v2 l-1,5 l-5.5,-3 z" fill="#18a018"/>
<rect x="738" y="185.8" width="8" height="1.2" fill="#202020"/>
<rect x="738" y="187.00" width="8" height="2.80" fill="#80e0f0"/>
<rect x="738" y="189.80" width="8" height="11.20" fill="#6ab870"/>
<path d="M749,188 l3.5,1 l-2.5,2 l3,1.5 l-2.5,2 l3,1.5 l-2.5,2 l2,1.5 l-2,1.5 z" fill="#f08020"/>
<rect x="735.3" y="204" width="20.5" height="22" fill="#f8c080" stroke="#9a6a3a" stroke-width="1"/>
<rect x="737.5" y="206.50" width="16.5" height="3.00" fill="#70e8f0"/>
<rect x="737.5" y="209.50" width="16.5" height="1.20" fill="#303030"/>
<rect x="737.5" y="210.70" width="16.5" height="1.80" fill="#a8a040"/>
<rect x="741" y="209" width="8" height="1.6" fill="#606060"/>
<path d="M737.5,216 h16.5 v1 q-8,6 -16.5,0 z" fill="#f07820" stroke="#c04010" stroke-width="0.5"/>
<rect x="737" y="228.5" width="17" height="2.2" fill="#70e8f0"/>
<path d="M737,230.7 H754" stroke="#202020" stroke-width="1"/>
<path d="M740,233 a6,6 0 1 0 11,0 z" fill="#1428d8"/>
<path d="M742,232 a3.8,4.5 0 1 0 7,0 z" fill="#10a0a0"/>
<path d="M743.2,231.2 a2.4,3.2 0 1 0 4.6,0 z" fill="#e8e020"/>
<path d="M744,231 h3 v1.5 h-3 z" fill="#d02010"/>
<path d="M737,252.3 H755" stroke="#b8b8cc" stroke-width="1"/><path d="M737,253.3 H755" stroke="#e8e8f2" stroke-width="1"/>
<path d="M743,260.5 l5,5.5 M748,260.5 l-5,5.5" stroke="#e02030" stroke-width="1.4"/>
<path d="M738.3,264.3 h2.4 v5 h9.6 v-5 h2.4 v7.6 h-14.4 z" fill="#2020c0"/>
<path d="M738.3,271.5 h14.4" stroke="#8010a0" stroke-width="1"/>
<rect x="738.4" y="281.5" width="14.3" height="14" fill="#f4f4f8"/>
<rect x="738.4" y="281.5" width="14.3" height="3" fill="#1010b8"/>
<path d="M738.4,288 h14.3 M738.4,291.5 h14.3 M743,284.5 v11 M748,284.5 v11" stroke="#a8a8c0" stroke-width="0.8"/>
<path d="M737,303.8 H755" stroke="#b0b0c8" stroke-width="1"/><path d="M737,304.8 H755" stroke="#dedeea" stroke-width="1"/>
<path d="M737.5,307.5 q8.5,10 17,0" fill="none" stroke="#d02020" stroke-width="1.6"/>
<path d="M738.5,307 q7.5,7 15,0" fill="#40c0a0" stroke="#208060" stroke-width="0.6"/>
<rect x="737" y="317.5" width="12.5" height="8.5" fill="#f8f8fc"/>
<text x="737.3" y="325.8" font-family="Liberation Sans" font-weight="bold" font-size="9.5" fill="#1c2aa8" textLength="11" lengthAdjust="spacingAndGlyphs">W</text>
<text x="738" y="339" font-family="Liberation Sans" font-style="italic" font-weight="bold" font-size="5.5" fill="#d8d8e8" textLength="15" lengthAdjust="spacingAndGlyphs">f bdb</text>
<path d="M740,345.5 h6 l5,-3" stroke="#e8e8f4" stroke-width="1.1" fill="none"/>
<path d="M737,354.2 H755" stroke="#9898b8" stroke-width="1"/><path d="M737,355.2 H755" stroke="#c8c8dc" stroke-width="1"/>
<rect x="737.2" y="360.8" width="17.8" height="16.4" fill="#f8f8fa" stroke="#202840" stroke-width="1.3"/>
<path d="M739,375 q6,-2 14,-12" stroke="#e03030" stroke-width="0.9" fill="none"/><path d="M739,376 q8,-1 14,-9" stroke="#30a030" stroke-width="0.9" fill="none"/><path d="M740,371 q4,-3 8,-9" stroke="#2040c0" stroke-width="0.9" fill="none"/>
<text x="738" y="390.5" font-family="Liberation Sans" font-weight="bold" font-size="5.5" fill="#d8d8e8" textLength="15" lengthAdjust="spacingAndGlyphs">HSAC</text>
<path d="M740,396 h6 l5,-3" stroke="#e8e8f4" stroke-width="1.1" fill="none"/>
<path d="M752.5,404.5 h4 v4 h-4 z" fill="#101018"/><path d="M753.5,405.5 l2,1.5 l-2,1.5 z" fill="#fff"/>
<rect x="762.6" y="84.5" width="26.7" height="26.8" fill="#f8c890" stroke="#a87040" stroke-width="1"/>
<rect x="765" y="87.00" width="22" height="6.60" fill="#80e8f0"/>
<rect x="765" y="93.60" width="22" height="5.50" fill="#8a8a10"/>
<rect x="765" y="99.10" width="22" height="3.96" fill="#a01010"/>
<rect x="765" y="103.06" width="22" height="5.94" fill="#8a8a10"/>
<path d="M768,93.6 h6 v-1.5 h-1.8 v-3.4 h-2.4 v3.4 h-1.8 z M778,93.6 h6 v-1.5 h-1.8 v-3.4 h-2.4 v3.4 h-1.8 z" fill="#f0f0f0" stroke="#202020" stroke-width="0.8"/>
<rect x="764.8" y="114.00" width="22.2" height="2.80" fill="#80e8f0"/>
<rect x="764.8" y="116.80" width="22.2" height="11.18" fill="#189018"/>
<rect x="764.8" y="127.98" width="22.2" height="4.19" fill="#a01010"/>
<rect x="764.8" y="132.17" width="22.2" height="5.13" fill="#189018"/>
<rect x="774.5" y="115.5" width="3" height="21" fill="#e8e8e8" stroke="#303030" stroke-width="0.8"/>
<rect x="765" y="142.00" width="22" height="7.70" fill="#80e8f0"/>
<rect x="765" y="149.70" width="22" height="5.50" fill="#f0f020"/>
<rect x="765" y="155.20" width="22" height="3.96" fill="#a01010"/>
<rect x="765" y="159.16" width="22" height="4.84" fill="#189018"/>
<path d="M767.5,149.5 l2,-4 h13 l2,4 z" fill="#c8c8c8" stroke="#303030" stroke-width="0.9"/>
<path d="M784.5,171 h4 v4 h-4 z" fill="#101018"/><path d="M785.5,172 l2,1.5 l-2,1.5 z" fill="#fff"/>
</svg>
</body></html>
